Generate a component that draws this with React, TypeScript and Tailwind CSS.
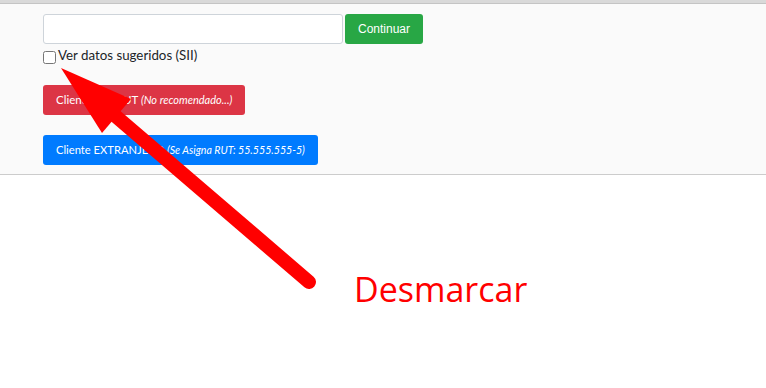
export default function App() {
  return (
    <div className="relative w-[766px] h-[388px] overflow-hidden bg-white font-['Lato',sans-serif] text-[#212529]">
      <div className="h-[4px] bg-[#d9d9d9] border-b border-[#c4c4c4]" />
      <div className="h-[171px] bg-[#fafafa] border-b border-[#cccccc] pl-[43px] pt-[10px]">
        <div className="flex gap-[2px]">
          <input
            type="text"
            className="w-[300px] h-[30px] bg-white border border-[#ced4da] rounded-[3px]"
          />
          <button className="w-[78px] h-[30px] rounded-[3px] bg-[#28a745] text-white text-[12px] font-['Liberation_Sans',sans-serif]">
            Continuar
          </button>
        </div>
        <label className="flex items-start mt-[3px] text-[13.3px] leading-[16px]">
          <input type="checkbox" className="w-[13px] h-[13px] mt-[4px] mr-[2px]" />
          Ver datos sugeridos (SII)
        </label>
        <button className="mt-[21px] h-[30px] px-[13px] rounded-[3px] bg-[#dc3545] text-white text-[11.5px]">
          Cliente SIN RUT <i className="text-[11px]">(No recomendado...)</i>
        </button>
        <div>
          <button className="mt-[20px] h-[30px] px-[13px] rounded-[3px] bg-[#007bff] text-white text-[11.2px]">
            Cliente EXTRANJERO <i className="text-[10.6px]">(Se Asigna RUT: 55.555.555-5)</i>
          </button>
        </div>
      </div>
      <svg className="absolute inset-0" width="766" height="388" viewBox="0 0 766 388">
        <line x1="112" y1="113" x2="309" y2="282" stroke="#ff0000" strokeWidth="14" strokeLinecap="round" />
        <polygon points="61,68 102,133 131,99" fill="#ff0000" />
      </svg>
      <div className="absolute left-[354px] top-[268px] text-[34px] leading-[42px] text-[#ff0000] font-['Open_Sans',sans-serif]">
        Desmarcar
      </div>
    </div>
  );
}
